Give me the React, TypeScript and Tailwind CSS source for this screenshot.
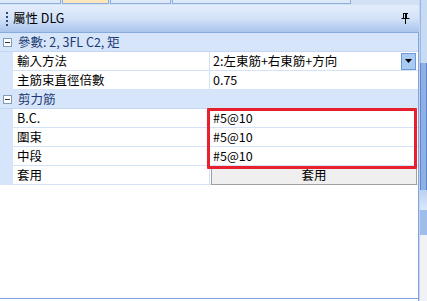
import React from 'react';

const font = { fontFamily: '"Segoe UI", "Noto Sans CJK TC", "Noto Sans", sans-serif' };

function Minus() {
  return (
    <div className="w-[9px] h-[9px] border border-[#7f9db9] bg-white flex items-center justify-center shrink-0">
      <div className="w-[5px] h-px bg-[#333]" />
    </div>
  );
}

function Category({ label }: { label: string }) {
  return (
    <div className="h-[19px] flex items-center bg-[#d6e5fa] border-b border-[#c4d8f5]">
      <div className="w-[14px] flex justify-center">
        <Minus />
      </div>
      <span className="pl-[4px] text-[12.5px] text-[#1c3a72]">{label}</span>
    </div>
  );
}

function Row({ name, children }: { name: string; children?: React.ReactNode }) {
  return (
    <div className="h-[19px] flex">
      <div className="w-[13px] bg-[#d6e5fa] shrink-0" />
      <div className="w-[197px] shrink-0 flex items-center pl-[4px] text-[12.5px] text-black border-b border-r border-[#d3e2f7]">
        {name}
      </div>
      <div className="flex-1 flex items-center border-b border-[#d3e2f7] text-[12.5px] text-black">
        {children}
      </div>
    </div>
  );
}

export default function App() {
  return (
    <div className="w-[427px] h-[301px] flex bg-white overflow-hidden" style={font}>
      <div className="w-[419px] flex flex-col">
        {/* tab strip */}
        <div className="h-[5px] bg-[#d3e1f6] flex">
          <div className="w-[61px] h-[4px] border-b border-r border-[#8eaedd] bg-[#dde8f8]" />
          <div className="w-[47px] h-[4px] ml-[1px] border-b border-x border-[#8eaedd] bg-[#fce6bd]" />
          <div className="w-[61px] h-[4px] ml-[1px] border-b border-x border-[#8eaedd] bg-[#dde8f8]" />
          <div className="w-[179px] h-[4px] ml-[1px] border-b border-x border-[#8eaedd] bg-[#dde8f8]" />
        </div>
        {/* title bar */}
        <div className="h-[28px] flex items-center bg-gradient-to-b from-[#e4edfb] via-[#d3e2f8] to-[#a9c4ec] border-b border-[#88aadd]">
          <div className="w-[13px] flex flex-col items-center gap-[2px]">
            <div className="w-[2px] h-[2px] bg-[#2b4a80]" />
            <div className="w-[2px] h-[2px] bg-[#2b4a80]" />
            <div className="w-[2px] h-[2px] bg-[#2b4a80]" />
            <div className="w-[2px] h-[2px] bg-[#2b4a80]" />
          </div>
          <span className="text-[12.5px] text-black">屬性 DLG</span>
          <div className="ml-auto mr-[9px]">
            <svg width="9" height="11" viewBox="0 0 9 11">
              <path d="M2 0.5h5M2.5 0.5v5M5.5 0.5v5M4.5 1v4M0.5 5.5h8M4.5 6v5" stroke="#000" strokeWidth="1" fill="none" />
            </svg>
          </div>
        </div>
        {/* property grid */}
        <div className="flex flex-col border-r border-[#7fa3da] flex-1">
          <Category label="參數: 2, 3FL C2, 矩" />
          <Row name="輸入方法">
            <div className="flex-1 h-full flex items-center pl-[3px] bg-white">2:左東筋+右東筋+方向</div>
            <div className="w-[15px] h-[17px] mr-[2px] bg-[#a9caf2] border border-[#6f9ad4] flex items-center justify-center">
              <svg width="7" height="4" viewBox="0 0 7 4">
                <path d="M0 0h7L3.5 4z" fill="#000" />
              </svg>
            </div>
          </Row>
          <Row name="主筋束直徑倍數">
            <span className="pl-[3px]">0.75</span>
          </Row>
          <Category label="剪力筋" />
          <div className="relative">
            <Row name="B.C.">
              <span className="pl-[3px]">#5@10</span>
            </Row>
            <Row name="圍束">
              <span className="pl-[3px]">#5@10</span>
            </Row>
            <Row name="中段">
              <span className="pl-[3px]">#5@10</span>
            </Row>
            <div className="absolute left-[207px] top-[-1px] w-[210px] h-[61px] border-[3px] border-[#e8202d] rounded-[1px]" />
          </div>
          <Row name="套用">
            <div className="flex-1 h-[19px] mx-[1px] bg-[#efefef] border border-[#a0a0a0] flex items-center justify-center">
              套用
            </div>
          </Row>
          <div className="flex-1 border-b border-[#7fa3da] mb-[2px]" />
        </div>
      </div>
      {/* outer right strip */}
      <div className="flex-1 flex flex-col border-l border-[#c5d6f0] bg-[#f4f7fb]">
        <div className="h-[63px] bg-[#c9daf3] border-l border-[#9ab6e3]" />
        <div className="h-[127px] bg-[#8eb0e6] border-x border-[#5f86c8]" />
        <div className="h-[20px] bg-gradient-to-b from-[#bcd0f0] to-[#dce8f9]" />
        <div className="h-[25px] bg-[#9fbdea]" />
        <div className="flex-1 bg-[#f0f2f6]" />
      </div>
    </div>
  );
}
